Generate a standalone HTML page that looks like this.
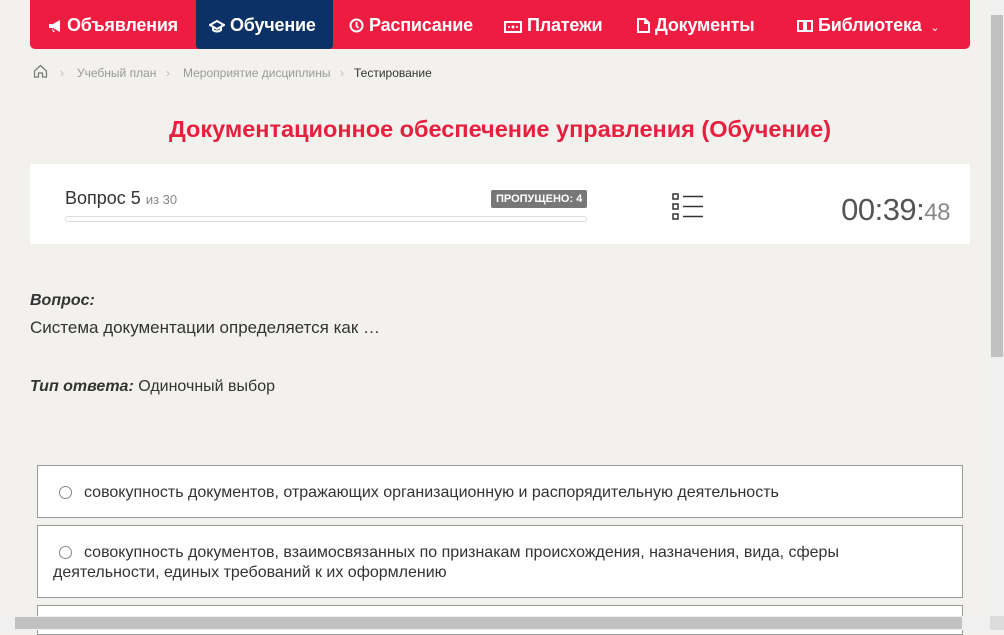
<!DOCTYPE html>
<html><head><meta charset="utf-8"><style>
*{margin:0;padding:0;box-sizing:border-box}
body{width:1004px;height:630px;overflow:hidden;background:#f2f1ee;font-family:"Liberation Sans",sans-serif;position:relative;color:#333}
.nav{position:absolute;left:30px;top:0;width:940px;height:49px;background:#ee1c40;border-radius:0 0 5px 5px}
.nav .it{position:absolute;top:0;height:49px;line-height:50px;color:#fff;font-size:18px;font-weight:bold;white-space:nowrap;letter-spacing:-0.2px}
.nav .act{background:#0b3166;border-radius:0 0 4px 4px}
.nav svg{vertical-align:-2px;margin-right:5px}
.bc{position:absolute;top:66px;left:33px;font-size:12px;color:#999;white-space:nowrap}
.bc span{position:absolute;top:0}
h1{position:absolute;top:116px;left:0;width:1000px;text-align:center;color:#e8203f;font-size:23.5px;font-weight:bold}
.panel{position:absolute;left:30px;top:164px;width:940px;height:80px;background:#fff}
.q{position:absolute;left:30px;font-size:16px}
.opt{position:absolute;left:37px;width:926px;background:#fff;border:1px solid #999;font-size:16px;color:#333;padding-left:15px;padding-right:110px;line-height:20px}
.rad{display:inline-block;width:13px;height:13px;border:1px solid #888;border-radius:50%;vertical-align:-2px;margin:0 6px 0 6px;background:#fff}
</style></head><body>
<div class="nav">
 <div class="it" style="left:18px"><svg width="14" height="14"><path d="M1 5h4l7-4v12l-7-4H1z M4 9l1 4h2" fill="#fff"/></svg>Объявления</div>
 <div class="it act" style="left:166px;width:137px;padding-left:13px"><svg width="16" height="14"><path d="M8 2L1 6l7 4 7-4z M4 8v3c2 2 6 2 8 0V8" fill="none" stroke="#fff" stroke-width="2"/></svg>Обучение</div>
 <div class="it" style="left:319px"><svg width="15" height="15"><circle cx="7.5" cy="7.5" r="6" fill="none" stroke="#fff" stroke-width="2"/><path d="M7.5 4v4l2 2" fill="none" stroke="#fff" stroke-width="1.8"/></svg>Расписание</div>
 <div class="it" style="left:474px"><svg width="18" height="12"><rect x="1" y="1" width="16" height="10" fill="none" stroke="#fff" stroke-width="2"/><circle cx="9" cy="6" r="1.5" fill="#fff"/><circle cx="5" cy="6" r="1" fill="#fff"/><circle cx="13" cy="6" r="1" fill="#fff"/></svg>Платежи</div>
 <div class="it" style="left:607px"><svg width="13" height="15"><path d="M1 1h7l4 4v9H1z M8 1v4h4" fill="none" stroke="#fff" stroke-width="2"/></svg>Документы</div>
 <div class="it" style="left:767px"><svg width="16" height="14"><path d="M1 2h6v10H1z M9 2h6v10H9z M7 12h2" fill="none" stroke="#fff" stroke-width="2"/></svg>Библиотека <span style="font-size:11px;font-weight:normal;margin-left:4px">&#8964;</span></div>
</div>
<div class="bc">
 <svg style="position:absolute;left:0;top:-2px" width="15" height="14"><path d="M1.5 7L7.5 1.5 13.5 7V13H9.5V9h-4v4h-4z" fill="none" stroke="#777" stroke-width="1.2"/></svg>
 <span style="left:27px;color:#bbb">›</span><span style="left:44px">Учебный план</span>
 <span style="left:133px;color:#bbb">›</span><span style="left:150px">Мероприятие дисциплины</span>
 <span style="left:307px;color:#bbb">›</span><span style="left:321px;color:#333">Тестирование</span>
</div>
<h1>Документационное обеспечение управления (Обучение)</h1>
<div class="panel">
 <div style="position:absolute;left:35px;top:24px;font-size:18px;color:#333">Вопрос 5 <span style="font-size:13px;color:#888">из 30</span></div>
 <div style="position:absolute;left:461px;top:26px;background:#777;color:#fff;font-size:11px;font-weight:bold;padding:3px 5px;border-radius:2px">ПРОПУЩЕНО: 4</div>
 <div style="position:absolute;left:35px;top:52px;width:522px;height:6px;border:1px solid #ddd;border-radius:4px"></div>
 <svg style="position:absolute;left:642px;top:29px" width="32" height="28"><g fill="none" stroke="#333" stroke-width="1.5"><rect x="1" y="1" width="5" height="5"/><rect x="1" y="11" width="5" height="5"/><rect x="1" y="21" width="5" height="5"/><path d="M11 3.5h20M11 13.5h20M11 23.5h20"/></g></svg>
 <div style="position:absolute;right:20px;top:28px;font-size:31px;color:#555;letter-spacing:-0.5px">00:39:<span style="font-size:24px;color:#888">48</span></div>
</div>
<div class="q" style="top:292px;font-weight:bold;font-style:italic">Вопрос:</div>
<div class="q" style="top:318px;font-size:17px">Система документации определяется как …</div>
<div class="q" style="top:378px"><b><i>Тип ответа:</i></b> Одиночный выбор</div>
<div class="opt" style="top:465px;height:53px;padding-top:17px"><span class="rad" style="margin:0 12px 0 6px"></span>совокупность документов, отражающих организационную и распорядительную деятельность</div>
<div class="opt" style="top:525px;height:73px;padding-top:17px"><span class="rad" style="margin:0 12px 0 6px"></span>совокупность документов, взаимосвязанных по признакам происхождения, назначения, вида, сферы деятельности, единых требований к их оформлению</div>
<div class="opt" style="top:605px;height:30px"></div>
<div style="position:absolute;right:0;top:0;width:14px;height:616px;background:#f0f0f0"></div>
<div style="position:absolute;right:1px;top:15px;width:12px;height:342px;background:#c1c1c1"></div>
<div style="position:absolute;left:0;top:616px;width:990px;height:14px;background:#f0f0f0"></div>
<div style="position:absolute;left:15px;top:617px;width:947px;height:12px;background:#c1c1c1"></div>
<div style="position:absolute;right:0;top:616px;width:14px;height:14px;background:#dcdcdc"></div>
</body></html>
